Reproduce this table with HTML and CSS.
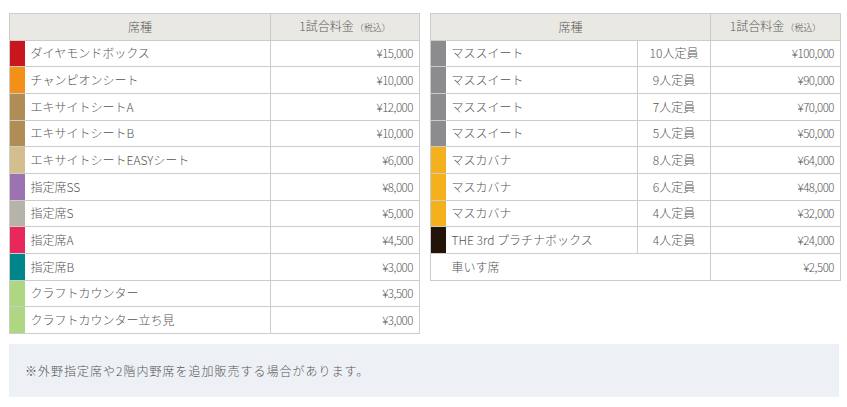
FILE: index.html
```html
<!DOCTYPE html>
<html lang="ja">
<head>
<meta charset="utf-8">
<link rel="stylesheet" href="styles.css">
</head>
<body>
<div class="page">
  <div class="tables">
    <table class="price">
      <colgroup><col class="c-color"><col class="c-name"><col class="c-price"></colgroup>
      <thead>
        <tr><th colspan="2">席種</th><th>1試合料金<small>（税込）</small></th></tr>
      </thead>
      <tbody>
        <tr><td class="sw" style="background:#c8161e"></td><td class="name">ダイヤモンドボックス</td><td class="yen">¥15,000</td></tr>
        <tr><td class="sw" style="background:#f39018"></td><td class="name">チャンピオンシート</td><td class="yen">¥10,000</td></tr>
        <tr><td class="sw" style="background:#b08d55"></td><td class="name">エキサイトシートA</td><td class="yen">¥12,000</td></tr>
        <tr><td class="sw" style="background:#b08d55"></td><td class="name">エキサイトシートB</td><td class="yen">¥10,000</td></tr>
        <tr><td class="sw" style="background:#d4be8d"></td><td class="name">エキサイトシートEASYシート</td><td class="yen">¥6,000</td></tr>
        <tr><td class="sw" style="background:#9b73b1"></td><td class="name">指定席SS</td><td class="yen">¥8,000</td></tr>
        <tr><td class="sw" style="background:#b6b3ab"></td><td class="name">指定席S</td><td class="yen">¥5,000</td></tr>
        <tr><td class="sw" style="background:#e8275c"></td><td class="name">指定席A</td><td class="yen">¥4,500</td></tr>
        <tr><td class="sw" style="background:#00868a"></td><td class="name">指定席B</td><td class="yen">¥3,000</td></tr>
        <tr><td class="sw" style="background:#afd683"></td><td class="name">クラフトカウンター</td><td class="yen">¥3,500</td></tr>
        <tr><td class="sw" style="background:#afd683"></td><td class="name">クラフトカウンター立ち見</td><td class="yen">¥3,000</td></tr>
      </tbody>
    </table>
    <table class="price">
      <colgroup><col class="c-color"><col class="c-name2"><col class="c-cap"><col class="c-price2"></colgroup>
      <thead>
        <tr><th colspan="3">席種</th><th>1試合料金<small>（税込）</small></th></tr>
      </thead>
      <tbody>
        <tr><td class="sw" style="background:#8c8c8e"></td><td class="name">マススイート</td><td class="cap">10人定員</td><td class="yen">¥100,000</td></tr>
        <tr><td class="sw" style="background:#8c8c8e"></td><td class="name">マススイート</td><td class="cap">9人定員</td><td class="yen">¥90,000</td></tr>
        <tr><td class="sw" style="background:#8c8c8e"></td><td class="name">マススイート</td><td class="cap">7人定員</td><td class="yen">¥70,000</td></tr>
        <tr><td class="sw" style="background:#8c8c8e"></td><td class="name">マススイート</td><td class="cap">5人定員</td><td class="yen">¥50,000</td></tr>
        <tr><td class="sw" style="background:#f4b11d"></td><td class="name">マスカバナ</td><td class="cap">8人定員</td><td class="yen">¥64,000</td></tr>
        <tr><td class="sw" style="background:#f4b11d"></td><td class="name">マスカバナ</td><td class="cap">6人定員</td><td class="yen">¥48,000</td></tr>
        <tr><td class="sw" style="background:#f4b11d"></td><td class="name">マスカバナ</td><td class="cap">4人定員</td><td class="yen">¥32,000</td></tr>
        <tr><td class="sw" style="background:#231409"></td><td class="name">THE 3rd プラチナボックス</td><td class="cap">4人定員</td><td class="yen">¥24,000</td></tr>
        <tr><td class="sw"></td><td class="name" colspan="2">車いす席</td><td class="yen">¥2,500</td></tr>
      </tbody>
    </table>
  </div>
  <div class="note">※外野指定席や2階内野席を追加販売する場合があります。</div>
</div>
</body>
</html>
```

FILE: styles.css
```css
html, body {
  margin: 0;
  padding: 0;
  background: #fff;
}
body {
  font-family: "Noto Sans CJK JP", "Noto Sans", sans-serif;
  font-weight: 300;
  color: #555;
  font-size: 12px;
}
.page {
  padding: 13px 8px 0 9px;
}
.tables {
  display: flex;
  align-items: flex-start;
  gap: 10px;
}
.price {
  width: 410px;
  border-collapse: collapse;
  table-layout: fixed;
}
.price th,
.price td {
  border: 1px solid #cccccc;
  height: 25.67px;
  padding: 0 6px;
  line-height: 16px;
  font-weight: 300;
  white-space: nowrap;
}
.price th {
  background: #e9e8e2;
  text-align: center;
  color: #5a5a5a;
}
.price th small {
  font-size: 9px;
  margin-left: 1px;
}
.c-color { width: 15px; }
.c-name { width: 246px; }
.c-price { width: 149px; }
.c-name2 { width: 192px; }
.c-cap { width: 73px; }
.c-price2 { width: 130px; }
.price td.sw {
  padding: 0;
  border-right: 0;
}
.price td.name {
  border-left: 0;
}
.price td.cap {
  text-align: center;
}
.price td.yen {
  text-align: right;
  font-size: 11.5px;
  letter-spacing: -0.04em;
}
.note {
  margin-top: 10px;
  width: 830px;
  box-sizing: border-box;
  height: 53px;
  background: #edf1f5;
  padding: 0 16px;
  display: flex;
  align-items: center;
  font-size: 12px;
  color: #555;
  letter-spacing: 1px;
}
```
